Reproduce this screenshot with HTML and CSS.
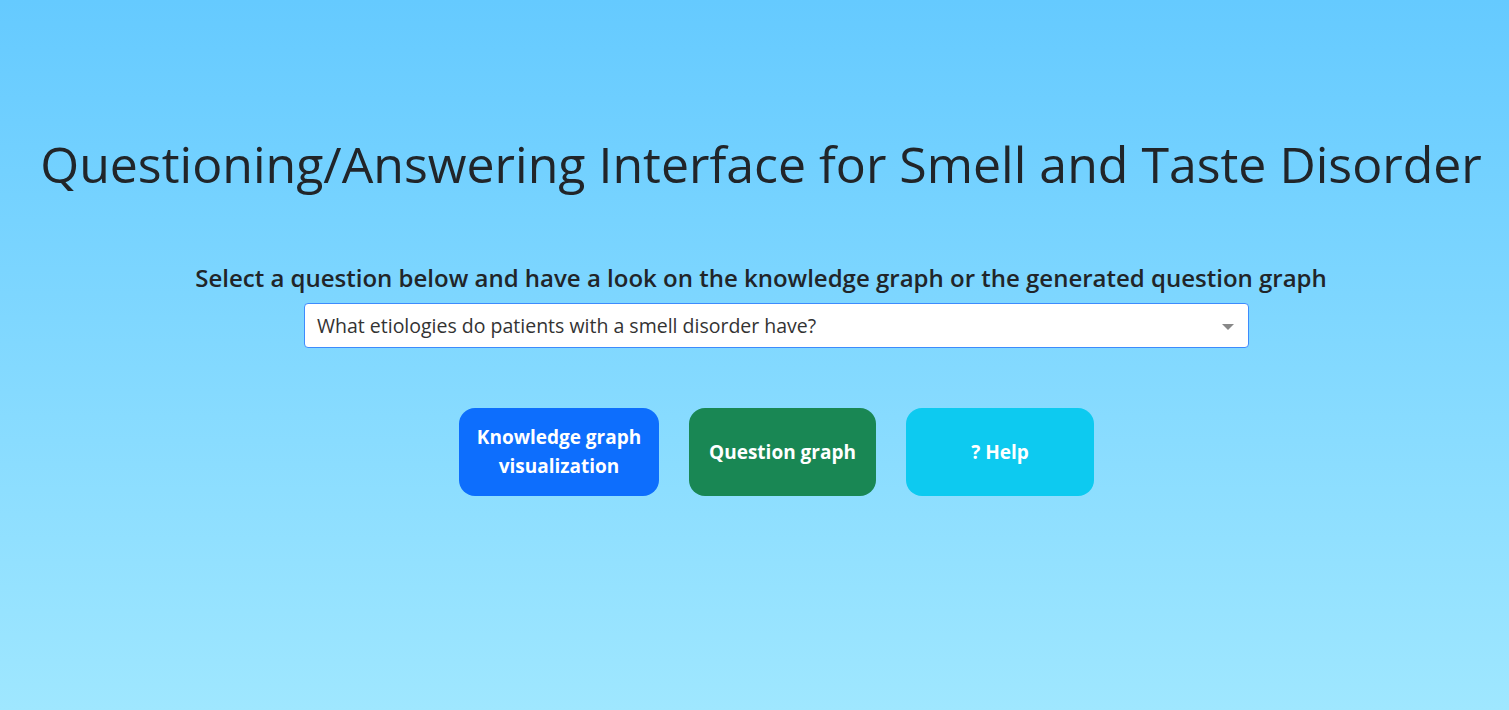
FILE: index.html
```html
<!DOCTYPE html>
<html lang="en">
<head>
<meta charset="utf-8">
<title>Questioning/Answering Interface for Smell and Taste Disorder</title>
<link rel="stylesheet" href="styles.css">
</head>
<body>
<main class="page">
  <h1 class="title">Questioning/Answering Interface for Smell and Taste Disorder</h1>
  <h4 class="subtitle">Select a question below and have a look on the knowledge graph or the generated question graph</h4>
  <div class="controls">
    <div class="select">
      <span class="select-text">What etiologies do patients with a smell disorder have?</span>
      <span class="select-arrow"></span>
    </div>
    <div class="buttons">
      <button class="btn btn-primary">Knowledge graph<br>visualization</button>
      <button class="btn btn-success">Question graph</button>
      <button class="btn btn-info">? Help</button>
    </div>
  </div>
</main>
</body>
</html>
```

FILE: styles.css
```css
html, body {
  margin: 0;
  padding: 0;
}
body {
  min-height: 100vh;
  background: linear-gradient(180deg, #65caff 0%, #9fe7ff 100%);
  font-family: "Open Sans", "Noto Sans", sans-serif;
  color: #212529;
}
.page {
  display: flex;
  flex-direction: column;
  align-items: center;
  padding-top: 132px;
}
.title {
  margin: 0;
  font-size: 50px;
  font-weight: 400;
  line-height: 64px;
  text-align: center;
  padding-left: 13px;
}
.subtitle {
  margin: 67px 0 0;
  font-size: 24px;
  font-weight: 600;
  line-height: 30px;
  padding-left: 13px;
  white-space: nowrap;
}
.controls {
  display: flex;
  flex-direction: column;
  align-items: center;
  padding-left: 44px;
}
.select {
  margin-top: 10px;
  box-sizing: border-box;
  width: 945px;
  height: 45px;
  background: #fff;
  border: 1px solid #3d8bfd;
  border-radius: 4px;
  display: flex;
  align-items: center;
  justify-content: space-between;
  padding: 0 14px 0 12px;
}
.select-text {
  font-size: 19.5px;
  color: #333;
}
.select-arrow {
  width: 0;
  height: 0;
  border-left: 6px solid transparent;
  border-right: 6px solid transparent;
  border-top: 6px solid #888;
  margin-top: 2px;
}
.buttons {
  display: flex;
  gap: 30px;
  margin-top: 60px;
}
.btn {
  height: 88px;
  border: none;
  border-radius: 16px;
  color: #fff;
  font-family: inherit;
  font-size: 19px;
  font-weight: 700;
  line-height: 29px;
  padding: 0 16px;
}
.btn-primary { background: #0d6efd; width: 200px; }
.btn-success { background: #198754; width: 187px; }
.btn-info { background: #0dcaf0; width: 188px; }
```
